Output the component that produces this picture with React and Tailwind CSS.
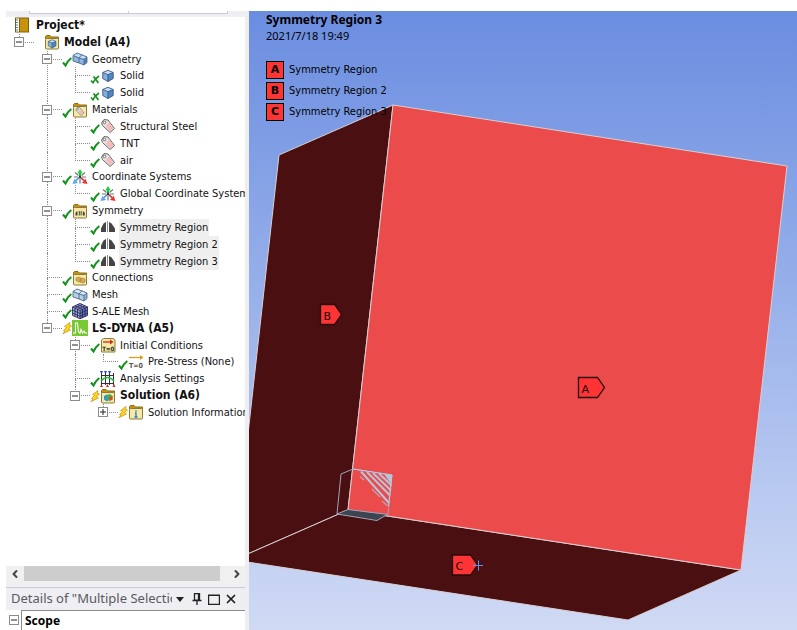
import React from 'react';
import clsx from 'clsx';
import { ChevronLeft, ChevronRight, X } from 'lucide-react';

/* ---------- icons ---------- */

const Svg = ({ children }) => (
  <svg viewBox="0 0 16 16" className="h-4 w-4 shrink-0" aria-hidden="true">{children}</svg>
);

const Folder = ({ children }) => (
  <Svg>
    <path d="M1.5 5V2.5l1-1H6L7.5 3h7v3" fill="#c8930c" stroke="#8a6a1c" />
    <rect x="1.5" y="4.5" width="13" height="10.5" rx="1" fill="#f5e9a4" stroke="#8c7a3c" />
    {children}
  </Svg>
);

const Cube = ({ transform }) => (
  <g transform={transform}>
    <path d="M8 1.5 14 4v7l-6 3.5L2 11V4z" fill="#7fb0e0" />
    <path d="M8 1.5 14 4 8 6.5 2 4z" fill="#c4e0f8" />
    <path d="M8 6.5 14 4v7l-6 3.5z" fill="#4f86c4" />
    <path d="M8 1.5 14 4v7l-6 3.5L2 11V4zM2 4l6 2.5L14 4M8 6.5v8" fill="none" stroke="#3d5678" />
  </g>
);

const Blocks = ({ top, left, right }) => (
  <Svg>
    <path d="M1 4.5 5 2l4 1.5 6 2v6L12 14l-5-2-6-2z" fill={left} />
    <path d="M1 4.5 5 2l4 1.5L15 6l-3 2z" fill={top} />
    <path d="M12 8l3-2v5.5L12 14z" fill={right} />
    <path d="M1 4.5 5 2l4 1.5L15 6v5.5L12 14l-5-2-6-2zM1 4.5 7 7l5 1.5L15 6M7 7v5M12 8.5V14M7 7l3-3.5" fill="none" stroke="#50698c" strokeWidth="0.9" />
  </Svg>
);

const Tag = ({ transform }) => (
  <g transform={transform}>
    <path d="M1.5 5 4 1.5l4 .5 6.5 8.5-4.5 4L2.5 7.5z" fill="#e9e4e4" stroke="#666" />
    <path d="M7 6.5 9.5 4.5l4 6-3.5 3-4-5z" fill="#f5baba" />
    <circle cx="4.5" cy="4.5" r="1.3" fill="#fff" stroke="#555" strokeWidth="0.8" />
  </g>
);

const Bolt = () => (
  <svg viewBox="0 0 10 12" className="h-3 w-2.5 shrink-0" aria-hidden="true">
    <path d="M8 .5 2.5 4.5l2 1L1.5 8.5l1.5.5L.8 11.8 8.5 8 6.5 6.5l3-2.5-2-.8z" fill="#ffd21c" stroke="#b8860b" strokeWidth="0.6" />
  </svg>
);

const Check = () => (
  <svg viewBox="0 0 10 10" className="mt-1.5 h-2.5 w-2.5 shrink-0" aria-hidden="true">
    <path d="M1 5.5l2.5 3Q5.5 4 9.3 1" fill="none" stroke="#12921a" strokeWidth="2" />
  </svg>
);

const CheckCross = () => (
  <svg viewBox="0 0 10 10" className="mt-1.5 h-2.5 w-2.5 shrink-0" aria-hidden="true">
    <path d="M1 6.5l2 2.2Q5 4.5 9 2M3.5 2.5 8.5 9" fill="none" stroke="#12921a" strokeWidth="1.7" />
  </svg>
);

const icons = {
  project: (
    <Svg>
      <rect x="1.5" y="1" width="13" height="14" fill="#c8930c" stroke="#7d5c14" />
      <rect x="2" y="1.5" width="3" height="13" fill="#fff" />
      <path d="M5.5 1v14" stroke="#7d5c14" />
      <path d="M1 3h3M1 5.5h3M1 8h3M1 10.5h3M1 13h3" stroke="#555" strokeWidth="0.8" />
    </Svg>
  ),
  model: <Folder><Cube transform="translate(3 4.8) scale(0.64)" /></Folder>,
  geometry: <Blocks top="#c2ddf5" left="#8bb7e2" right="#4e83be" />,
  solid: <Svg><Cube transform="translate(1 1) scale(0.87)" /></Svg>,
  materials: <Folder><Tag transform="translate(3 4.5) scale(0.62)" /></Folder>,
  material: <Svg><Tag /></Svg>,
  axes: (
    <Svg>
      <path d="M3 3.5 6.5 6.5M13 3.5 9.5 6.5M8 10v4.5M2 8h4M10 8h4" stroke="#777" strokeWidth="1.2" />
      <path d="M8 8V4" stroke="#16b83a" strokeWidth="2" />
      <path d="M8 0l2.8 4.5H5.2z" fill="#20d040" />
      <path d="M8 8l4 3.5" stroke="#c22" strokeWidth="1.5" />
      <path d="M15.5 15l-5.5-1 3.5-4.3z" fill="#f03030" />
      <path d="M8 8l-4 3.5" stroke="#48c" strokeWidth="1.5" />
      <path d="M.5 15l2-5.3L6 14z" fill="#59a8f5" />
      <circle cx="8" cy="8" r="1.2" fill="#333" />
    </Svg>
  ),
  symmetry: (
    <Folder>
      <path d="M3.5 12.5V10l1-1.5h1v4zM6.8 12.5V8h1v4.5zM8.6 12.5V8h1v4.5zM10.8 12.5v-4h1l1 1.5v2.5z" fill="#444" />
    </Folder>
  ),
  region: (
    <Svg>
      <path d="M1 13V9.5L3.5 4.500 6 3v10z" fill="#444" />
      <path d="M7.5 2v11" stroke="#8a8a8a" />
      <path d="M9 13V3l2.5 1.5L15 9.5V13z" fill="#444" />
    </Svg>
  ),
  connections: (
    <Folder>
      <path d="M4 8l3-1 2 1v3l-2 1-3-1.5zM8 9l3-1 2 1v3l-2 1-3-1z" fill="#d6aa50" stroke="#a98540" strokeWidth="0.7" />
    </Folder>
  ),
  mesh: <Blocks top="#d4e8f5" left="#b3d2e8" right="#8db8d8" />,
  sale: (
    <Svg>
      <path d="M8 0l7.5 3.5v9L8 16 .5 12.5v-9z" fill="#a0aede" />
      <path d="M8 7l7.5-3.5v9L8 16z" fill="#6c78b8" />
      <path d="M8 .5 15.5 4v8.5L8 15.7.5 12.5V4zM.5 4 8 7.5 15.5 4M8 7.5v8M3 2.8l7.5 3.5v8.5M5.5 1.5 13 5v8.5M13 2.8 5.5 6.3v8.5M10.5 1.5 3 5v8.5M.5 7 8 10.5 15.5 7M.5 10 8 13.3l7.5-3.3" fill="none" stroke="#20204e" strokeWidth="0.8" />
    </Svg>
  ),
  dyna: (
    <Svg>
      <rect width="16" height="16" fill="#78c832" />
      <path d="M1 13h2.5V3h2l1 9 1.5 1 1-3.5 1.5 3.5 1.5-2 1 2h2" fill="none" stroke="#fff" strokeWidth="1.1" />
    </Svg>
  ),
  initial: (
    <Svg>
      <path d="M1.5 15V3l2-1.5H13L15 3v12z" fill="#f5e9a4" stroke="#8c7a3c" />
      <path d="M3 5h8" stroke="#d22" strokeWidth="1.3" />
      <path d="M10 2.5 13.5 5 10 7.5z" fill="#d22" />
      <text x="8.3" y="13.5" textAnchor="middle" fontSize="6" fontWeight="700" fontFamily="DejaVu Sans Condensed" fill="#222">T=0</text>
    </Svg>
  ),
  prestress: (
    <Svg>
      <path d="M1 3.5h12" stroke="#d8a020" strokeWidth="1.3" />
      <path d="M12 1l3.5 2.5L12 6z" fill="#d8a020" />
      <text x="8" y="14" textAnchor="middle" fontSize="7" fontWeight="700" fontFamily="DejaVu Sans Condensed" fill="#555">T=0</text>
    </Svg>
  ),
  analysis: (
    <Svg>
      <path d="M1.5 2v12M5.5 2v12M9.5 2v12M13.5 2v12M1 4.5h13M1 12.5h13" stroke="#333" />
      <path d="M1 10q6.5-7 13 0" fill="none" stroke="#18c030" strokeWidth="1.5" />
      <path d="M0 0h3L1.5 3zM4 0h3L5.5 3zM8 0h3L9.5 3z" fill="#2438d8" />
      <path d="M0 16h3l-1.5-3zM6 16h3l-1.5-3zM12.5 16h3L14 13z" fill="#e02020" />
    </Svg>
  ),
  solution: (
    <Folder>
      <path d="M4 8l3-1.5L9 8v4l-2 1.5-3-2z" fill="#2898d8" />
      <path d="M7 7l3-1 2.5 2v3.5l-3 1.5L7 11z" fill="#3cb84a" />
      <path d="M9 9l3.5-1v3.5l-3 1.5z" fill="#e04a2c" />
    </Folder>
  ),
  info: (
    <Folder>
      <path d="M8 6.3v1.4M7 9h1v4M6.5 13h3" fill="none" stroke="#2878d8" strokeWidth="1.3" />
    </Folder>
  ),
};

/* ---------- outline tree ---------- */

// guides: one entry per ancestor column, 1 = dotted line runs through, 0 = blank
const nodes = [
  { label: 'Model (A4)', icon: 'model', guides: [], last: true, box: '−', bold: true },
  { label: 'Geometry', icon: 'geometry', guides: [0], box: '−', state: 'ok' },
  { label: 'Solid', icon: 'solid', guides: [0, 1], state: 'okx' },
  { label: 'Solid', icon: 'solid', guides: [0, 1], last: true, state: 'okx' },
  { label: 'Materials', icon: 'materials', guides: [0], box: '−', state: 'ok' },
  { label: 'Structural Steel', icon: 'material', guides: [0, 1], state: 'ok' },
  { label: 'TNT', icon: 'material', guides: [0, 1], state: 'ok' },
  { label: 'air', icon: 'material', guides: [0, 1], last: true, state: 'ok' },
  { label: 'Coordinate Systems', icon: 'axes', guides: [0], box: '−', state: 'ok' },
  { label: 'Global Coordinate System', icon: 'axes', guides: [0, 1], last: true, state: 'ok' },
  { label: 'Symmetry', icon: 'symmetry', guides: [0], box: '−', state: 'ok' },
  { label: 'Symmetry Region', icon: 'region', guides: [0, 1], state: 'ok', selected: true },
  { label: 'Symmetry Region 2', icon: 'region', guides: [0, 1], state: 'ok', selected: true },
  { label: 'Symmetry Region 3', icon: 'region', guides: [0, 1], last: true, state: 'ok', selected: true },
  { label: 'Connections', icon: 'connections', guides: [0], state: 'ok' },
  { label: 'Mesh', icon: 'mesh', guides: [0], state: 'ok' },
  { label: 'S-ALE Mesh', icon: 'sale', guides: [0], state: 'ok' },
  { label: 'LS-DYNA (A5)', icon: 'dyna', guides: [0], last: true, box: '−', state: 'bolt', bold: true },
  { label: 'Initial Conditions', icon: 'initial', guides: [0, 0], box: '−', state: 'ok' },
  { label: 'Pre-Stress (None)', icon: 'prestress', guides: [0, 0, 1], last: true, state: 'ok' },
  { label: 'Analysis Settings', icon: 'analysis', guides: [0, 0], state: 'ok' },
  { label: 'Solution (A6)', icon: 'solution', guides: [0, 0], last: true, box: '−', state: 'bolt', bold: true },
  { label: 'Solution Information', icon: 'info', guides: [0, 0, 0], last: true, box: '+', state: 'bolt' },
];

const Expander = ({ sign, label }) => (
  <button
    type="button"
    aria-label={`${sign === '+' ? 'Expand' : 'Collapse'} ${label}`}
    className="flex h-2.5 w-2.5 items-center justify-center border border-[#8c8c8c] bg-white"
  >
    <svg viewBox="0 0 6 6" className="h-1.5 w-1.5" aria-hidden="true">
      <path d={sign === '+' ? 'M0 3h6M3 0v6' : 'M0 3h6'} stroke="#222" />
    </svg>
  </button>
);

const TreeRow = ({ node }) => (
  <li className="flex min-h-0 flex-1 items-center">
    {node.guides.map((on, col) => (
      <span key={col} className="h-full w-7 shrink-0 pl-[5px]">
        <span className={clsx('block h-full', on === 1 && 'border-l border-dotted border-[#8a8a8a]')} />
      </span>
    ))}
    <span className="relative flex h-full w-5 shrink-0 flex-col pl-[5px]">
      <span className="flex-1 border-b border-l border-dotted border-[#8a8a8a]" />
      <span className={clsx('flex-1', !node.last && 'border-l border-dotted border-[#8a8a8a]')} />
      {node.box && (
        <span className="absolute inset-y-0 left-0 flex items-center">
          <Expander sign={node.box} label={node.label} />
        </span>
      )}
    </span>
    <span className="flex w-2.5 shrink-0 items-center">
      {node.state === 'ok' && <Check />}
      {node.state === 'okx' && <CheckCross />}
      {node.state === 'bolt' && <Bolt />}
    </span>
    {icons[node.icon]}
    <span
      className={clsx(
        'ml-[3px] whitespace-nowrap px-px leading-[17px]',
        node.bold ? 'text-[12px] font-bold' : 'text-[11px]',
        node.selected && 'bg-[#efefef]'
      )}
    >
      {node.label}
    </span>
  </li>
);

const Outline = () => (
  <div className="min-h-0 flex-1 overflow-hidden bg-white pl-2">
    <ul className="flex h-[404px] flex-col font-['DejaVu_Sans_Condensed','DejaVu_Sans',sans-serif] text-[#111]">
      <li className="flex min-h-0 flex-1 items-center">
        {icons.project}
        <span className="ml-[5px] px-px text-[12px] font-bold leading-[17px]">Project*</span>
      </li>
      {nodes.map((node, i) => <TreeRow key={i} node={node} />)}
    </ul>
  </div>
);

const HorizontalScroll = () => (
  <div className="flex h-[15px] shrink-0 items-stretch bg-[#f0f0f0] text-[#444]">
    <button type="button" aria-label="Scroll left" className="flex w-[18px] items-center justify-center">
      <ChevronLeft className="h-3 w-3" strokeWidth={4} />
    </button>
    <div className="flex-1 bg-[#cdcdcd]" />
    <button type="button" aria-label="Scroll right" className="flex w-[25px] items-center justify-end pr-0.5">
      <ChevronRight className="h-3 w-3" strokeWidth={4} />
    </button>
  </div>
);

const Details = () => (
  <section className="shrink-0 bg-[#f0f0f0] pt-1.5">
    <header className="flex h-[23px] items-center border-t border-[#c8cce0] bg-[#eeeef3] pl-[5px] text-[#222]">
      <h2 className="w-[161px] overflow-hidden whitespace-nowrap font-['Noto_Sans',sans-serif] text-[13px] text-[#5a5a5f]">
        Details of "Multiple Selection"
      </h2>
      <button type="button" aria-label="Menu" className="ml-1 flex w-2 justify-center">
        <svg viewBox="0 0 8 5" className="h-[5px] w-2"><path d="M0 0h8L4 5z" fill="#222" /></svg>
      </button>
      <button type="button" aria-label="Pin" className="ml-2 flex">
        <svg viewBox="0 0 10 12" className="h-3 w-2.5">
          <path d="M2.5.7h5v6.5h-5zM6.5 1v6M.5 7.5h9M5 7.5V12" fill="none" stroke="#222" strokeWidth="1.3" />
        </svg>
      </button>
      <button type="button" aria-label="Maximize" className="ml-1.5 flex">
        <svg viewBox="0 0 12 11" className="h-[11px] w-3">
          <path d="M.6 1h10.8v9.4H.6zM.6 1.5h10.8" fill="none" stroke="#222" strokeWidth="1.2" />
        </svg>
      </button>
      <button type="button" aria-label="Close" className="ml-1 flex">
        <X className="h-3.5 w-3.5" strokeWidth={3} />
      </button>
    </header>
    <div className="flex h-5 bg-white">
      <div className="flex w-[15px] items-center justify-center">
        <Expander sign="−" label="Scope" />
      </div>
      <div className="flex flex-1 items-center border-l border-t border-[#8c8c8c] pl-[3px] font-['Noto_Sans',sans-serif] text-[12px] font-bold text-black">
        Scope
      </div>
    </div>
  </section>
);

/* ---------- graphics view ---------- */

const Marker = ({ x, y, w, letter }) => (
  <g>
    <path d={`M${x} ${y}h${w - 7}l7 10-7 10h-${w - 7}z`} fill="#ff3434" stroke="#260808" strokeWidth="1.3" />
    <text x={x + 3} y={y + 15} fontSize="11" fontFamily="DejaVu Sans" fill="#1a0505">{letter}</text>
  </g>
);

const Scene = () => (
  <svg viewBox="249 11 548 619" preserveAspectRatio="xMinYMin slice" className="absolute inset-0 h-full w-full" aria-label="Symmetry regions on the model">
    <g stroke="#d8cfd2" strokeWidth="1" strokeLinejoin="round">
      <path d="M279 155 393 105 348 510 234 560z" fill="#4a0f10" />
      <path d="M234 560 348 510 741 570 628 620z" fill="#4a0f10" />
      <path d="M393 105 787 166 741 570 348 510z" fill="#eb4b4b" />
    </g>
    {/* small charge block in the corner */}
    <path d="M337 514 348 509.5 388 514.5 377 520z" fill="#3c4450" />
    <path d="M353 469 392 475 388 514 377 520.5 337 514 341 474zM337 514l11-4.5L388 514.5" fill="none" stroke="#a3a5bc" />
    <path d="M353 469l39 6-3.5 31" fill="none" stroke="#b7cde2" />
    <path d="M384 474l8 1-1 9z" fill="#b7c4da" />
    <path d="M361 471.5 389 503M367 472l23 23.5M373 473l18 17.5M379 473.5l12.5 12" fill="none" stroke="#b7c4da" strokeWidth="2" />
    <path d="M360 476.5l4 3.5M372 489l8 8M382 501l5.5 5" fill="none" stroke="#b7a4b4" strokeWidth="1.2" />
    <Marker x={578.5} y={377.5} w={26} letter="A" />
    <Marker x={320.5} y={304.5} w={21} letter="B" />
    <Marker x={452.5} y={555} w={25} letter="C" />
    <path d="M473 565.5h10M478.5 560.5v10" stroke="#5f92f0" />
  </svg>
);

const legend = [
  { key: 'A', name: 'Symmetry Region' },
  { key: 'B', name: 'Symmetry Region 2' },
  { key: 'C', name: 'Symmetry Region 3' },
];

const GraphicsView = () => (
  <main className="relative min-w-0 flex-1 overflow-hidden bg-linear-to-b from-[#6b8de0] to-[#d0daf4] font-['DejaVu_Sans_Condensed','DejaVu_Sans',sans-serif] text-black">
    <Scene />
    <div className="relative pl-[17px] pt-px text-[11px] leading-4">
      <h1 className="font-['Noto_Sans',sans-serif] text-[12px] font-bold leading-4">Symmetry Region 3</h1>
      <p className="font-['Noto_Sans',sans-serif]">2021/7/18 19:49</p>
      <ul className="mt-[17px] flex flex-col gap-[3px]">
        {legend.map(item => (
          <li key={item.key} className="flex items-center gap-[5px]">
            <span className="flex h-[18px] w-[18px] items-center justify-center border border-black bg-[#ff3434] font-['DejaVu_Sans',sans-serif] font-bold">{item.key}</span>
            <span>{item.name}</span>
          </li>
        ))}
      </ul>
    </div>
  </main>
);

export default function App() {
  return (
    <div className="flex h-screen bg-white pt-[11px]">
      <aside className="flex w-[249px] shrink-0 flex-col border-r-4 border-[#ededf2] pl-1.5">
        <div className="flex h-1.5 shrink-0 bg-[#eeeef3] pb-[3px] pl-[23px] pr-[17px]">
          <div className="flex-1 border border-t-0 border-[#c8cce0] bg-white" />
          <div className="flex-1 border border-l-0 border-t-0 border-[#c8cce0] bg-white" />
        </div>
        <Outline />
        <HorizontalScroll />
        <Details />
      </aside>
      <GraphicsView />
    </div>
  );
}
